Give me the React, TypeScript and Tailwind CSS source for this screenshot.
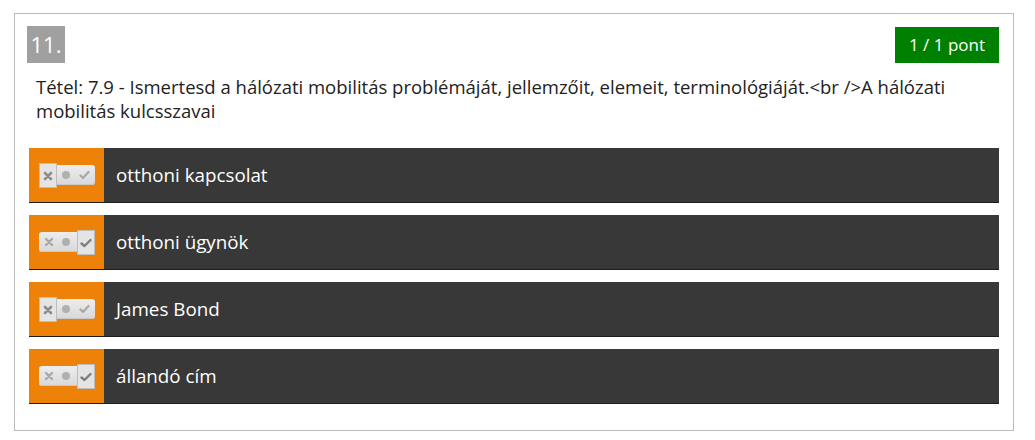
import React from "react";

const font = { fontFamily: '"Open Sans", "Noto Sans", sans-serif' };

function Toggle({ sel }: { sel: "x" | "ok" }) {
  return (
    <div className="relative flex h-[20px] w-[56px] items-center justify-between rounded-[3px] bg-gradient-to-b from-[#ededed] to-[#d8d8d8] px-[5px] shadow-[inset_0_-1px_0_#c8c8c8]">
      <svg width="10" height="10" viewBox="0 0 10 10">
        <path d="M2 2 L8 8 M8 2 L2 8" stroke="#a8a8a8" strokeWidth="2.4" strokeLinecap="round" />
      </svg>
      <div className="h-[8px] w-[8px] rounded-full bg-[#b0b0b0]" />
      <svg width="11" height="10" viewBox="0 0 11 10">
        <path d="M1.5 5.5 L4 8 L9.5 2" stroke="#a8a8a8" strokeWidth="2.2" fill="none" strokeLinecap="round" strokeLinejoin="round" />
      </svg>
      <div
        className={
          "absolute top-[-2px] h-[25px] w-[18px] border border-[#bdbdbd] bg-[#e4e4e4] flex items-center justify-center " +
          (sel === "x" ? "left-0" : "right-0")
        }
      >
        {sel === "x" ? (
          <svg width="10" height="10" viewBox="0 0 10 10">
            <path d="M2 2 L8 8 M8 2 L2 8" stroke="#8c8c8c" strokeWidth="2.6" strokeLinecap="round" />
          </svg>
        ) : (
          <svg width="12" height="10" viewBox="0 0 12 10">
            <path d="M1.5 5.5 L4.5 8 L10.5 2" stroke="#7e7e7e" strokeWidth="2.4" fill="none" strokeLinecap="round" strokeLinejoin="round" />
          </svg>
        )}
      </div>
    </div>
  );
}

function Row({ text, sel }: { text: string; sel: "x" | "ok" }) {
  return (
    <div className="flex h-[55px] border-b border-[#1e1e1e] bg-[#383838]">
      <div className="flex w-[75px] items-center justify-center bg-[#ee8208]">
        <Toggle sel={sel} />
      </div>
      <div className="flex items-center pl-[12px] text-[18.8px] text-white">{text}</div>
    </div>
  );
}

export default function App() {
  return (
    <div className="bg-white pl-[14px] pt-[13px]" style={font}>
      <div className="w-[1000px] border border-[#bbbbbb] px-[14px] pt-[12px] pb-[26px]">
        <div className="flex items-start justify-between">
          <div className="ml-[-2px] flex h-[37px] w-[38px] items-center justify-center bg-[#a0a0a0] text-[22px] text-white">
            11.
          </div>
          <div className="mt-[1px] flex h-[36px] w-[104px] items-center justify-center bg-[#008000] text-[17px] text-white">
            1 / 1 pont
          </div>
        </div>
        <div className="mt-[12px] px-[7px] text-[18.5px] leading-[24px] text-[#222]">
          Tétel: 7.9 - Ismertesd a hálózati mobilitás problémáját, jellemzőit, elemeit, terminológiáját.&lt;br /&gt;A hálózati mobilitás kulcsszavai
        </div>
        <div className="mt-[25px] flex flex-col gap-[12px]">
          <Row text="otthoni kapcsolat" sel="x" />
          <Row text="otthoni ügynök" sel="ok" />
          <Row text="James Bond" sel="x" />
          <Row text="állandó cím" sel="ok" />
        </div>
      </div>
    </div>
  );
}
